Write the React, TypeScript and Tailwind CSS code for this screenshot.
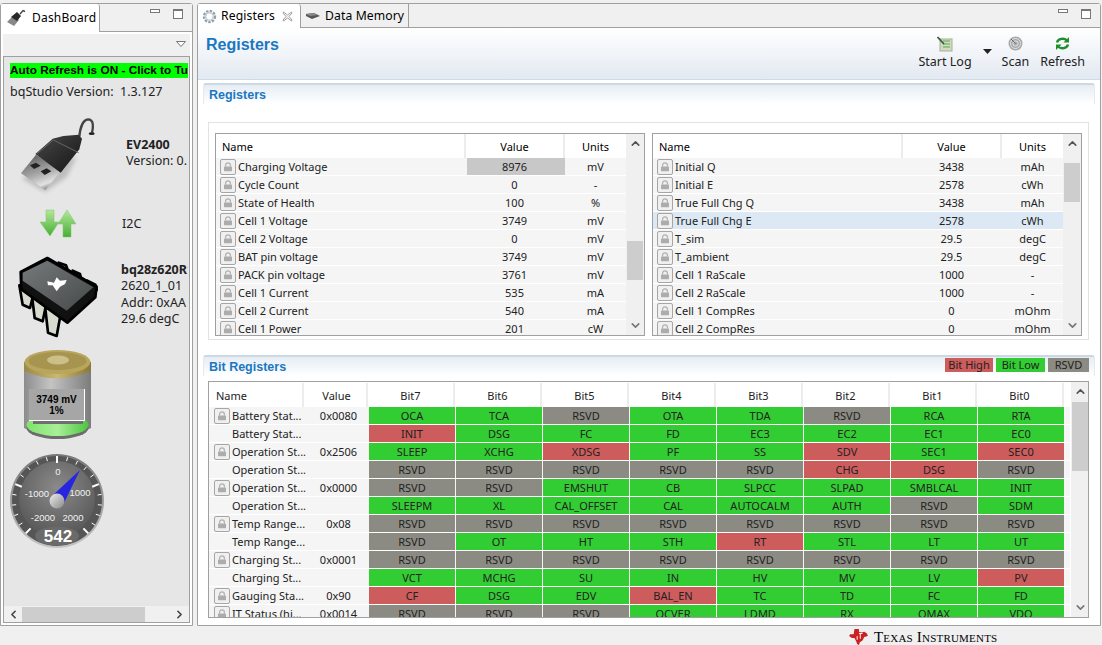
import { ChevronDown, ChevronLeft, ChevronRight, ChevronUp } from "lucide-react";

type Row = [string, string, string];
type Bit = [string, "g" | "r" | "x"];

const leftRows: Row[] = [
  ["Charging Voltage", "8976", "mV"],
  ["Cycle Count", "0", "-"],
  ["State of Health", "100", "%"],
  ["Cell 1 Voltage", "3749", "mV"],
  ["Cell 2 Voltage", "0", "mV"],
  ["BAT pin voltage", "3749", "mV"],
  ["PACK pin voltage", "3761", "mV"],
  ["Cell 1 Current", "535", "mA"],
  ["Cell 2 Current", "540", "mA"],
  ["Cell 1 Power", "201", "cW"],
];

const rightRows: Row[] = [
  ["Initial Q", "3438", "mAh"],
  ["Initial E", "2578", "cWh"],
  ["True Full Chg Q", "3438", "mAh"],
  ["True Full Chg E", "2578", "cWh"],
  ["T_sim", "29.5", "degC"],
  ["T_ambient", "29.5", "degC"],
  ["Cell 1 RaScale", "1000", "-"],
  ["Cell 2 RaScale", "1000", "-"],
  ["Cell 1 CompRes", "0", "mOhm"],
  ["Cell 2 CompRes", "0", "mOhm"],
];

const g = (s: string): Bit => [s, "g"];
const r = (s: string): Bit => [s, "r"];
const x: Bit = ["RSVD", "x"];

const bitRows: { name: string; value: string; lock: boolean; bits: Bit[] }[] = [
  { name: "Battery Stat...", value: "0x0080", lock: true, bits: [g("OCA"), g("TCA"), x, g("OTA"), g("TDA"), x, g("RCA"), g("RTA")] },
  { name: "Battery Stat...", value: "", lock: false, bits: [r("INIT"), g("DSG"), g("FC"), g("FD"), g("EC3"), g("EC2"), g("EC1"), g("EC0")] },
  { name: "Operation St...", value: "0x2506", lock: true, bits: [g("SLEEP"), g("XCHG"), r("XDSG"), g("PF"), g("SS"), r("SDV"), g("SEC1"), r("SEC0")] },
  { name: "Operation St...", value: "", lock: false, bits: [x, x, x, x, x, r("CHG"), r("DSG"), x] },
  { name: "Operation St...", value: "0x0000", lock: true, bits: [x, x, g("EMSHUT"), g("CB"), g("SLPCC"), g("SLPAD"), g("SMBLCAL"), g("INIT")] },
  { name: "Operation St...", value: "", lock: false, bits: [g("SLEEPM"), g("XL"), g("CAL_OFFSET"), g("CAL"), g("AUTOCALM"), g("AUTH"), x, g("SDM")] },
  { name: "Temp Range...", value: "0x08", lock: true, bits: [x, x, x, x, x, x, x, x] },
  { name: "Temp Range...", value: "", lock: false, bits: [x, g("OT"), g("HT"), g("STH"), r("RT"), g("STL"), g("LT"), g("UT")] },
  { name: "Charging St...", value: "0x0001", lock: true, bits: [x, x, x, x, x, x, x, x] },
  { name: "Charging St...", value: "", lock: false, bits: [g("VCT"), g("MCHG"), g("SU"), g("IN"), g("HV"), g("MV"), g("LV"), r("PV")] },
  { name: "Gauging Sta...", value: "0x90", lock: true, bits: [r("CF"), g("DSG"), g("EDV"), r("BAL_EN"), g("TC"), g("TD"), g("FC"), g("FD")] },
  { name: "IT Status (hi...", value: "0x0014", lock: true, bits: [x, x, x, g("OCVER"), g("LDMD"), g("RX"), g("QMAX"), g("VDQ")] },
];

const bitBg = { g: "bg-[#32cd32]", r: "bg-[#cd5c5c]", x: "bg-[#8b8b83]" };

function LockButton() {
  return (
    <span className="flex h-[16px] w-[16px] shrink-0 items-center justify-center rounded-[2px] border border-[#a6a6a6] bg-[#f0f0f0]">
      <svg width="10" height="10" viewBox="0 0 10 10">
        <path d="M2.6 4.5V3.2a2.4 2.4 0 0 1 4.8 0v1.3" fill="none" stroke="#b0b0b0" strokeWidth="1.2" />
        <rect x="1" y="4.4" width="8" height="4.8" rx="0.6" fill="#acacac" />
      </svg>
    </span>
  );
}

function WindowButtons() {
  return (
    <div className="flex items-start gap-[13px]">
      <span className="mt-[5px] h-[4px] w-[10px] border border-[#777] bg-white" />
      <span className="mt-[5px] h-[10px] w-[10px] border border-[#777] border-t-2 bg-white" />
    </div>
  );
}

function VScroll({ thumb }: { thumb: string }) {
  return (
    <div className="flex w-[18px] shrink-0 flex-col items-center bg-[#f0f0f0]">
      <ChevronUp size={13} strokeWidth={3} className="mt-[3px] shrink-0 text-[#555]" />
      <div className="w-full flex-1 overflow-hidden px-[1px]">
        <div className={`bg-[#cdcdcd] ${thumb}`} />
      </div>
      <ChevronDown size={13} strokeWidth={3} className="mb-[3px] shrink-0 text-[#777]" />
    </div>
  );
}

function RegTable({ rows, thumb, selected, hot }: { rows: Row[]; thumb: string; selected?: number; hot?: number }) {
  return (
    <div className="flex h-[203px] w-[430px] overflow-hidden border border-[#a0a0a0] bg-white">
      <div className="w-[410px] shrink-0">
        <div className="flex h-[24px] text-black">
          <div className="flex w-[250px] items-center border-r-2 border-[#ececec] pl-[6px]">Name</div>
          <div className="flex w-[99px] items-center justify-center border-r-2 border-[#ececec]">Value</div>
          <div className="flex w-[61px] items-center justify-center">Units</div>
        </div>
        {rows.map((row, i) => (
          <div key={row[0]} className={`flex h-[18px] items-center border-b border-white ${i === selected ? "bg-[#dce9f4]" : "bg-[#f5f5f5]"}`}>
            <div className="flex w-[251px] items-center gap-[2px] pl-[4px]">
              <LockButton />
              <span className="whitespace-nowrap">{row[0]}</span>
            </div>
            <div className={`flex h-full w-[98px] items-center justify-center pr-[3px] ${i === hot ? "bg-[#c8c8c8]" : ""}`}>{row[1]}</div>
            <div className="flex w-[61px] items-center justify-center">{row[2]}</div>
          </div>
        ))}
      </div>
      <VScroll thumb={thumb} />
    </div>
  );
}

function SectionHead({ title, children }: { title: string; children?: React.ReactNode }) {
  return (
    <div className="flex h-[21px] items-center justify-between rounded-t-[3px] border-t-2 border-x border-x-[#e4eaf0] border-t-[#ccd8e4] bg-gradient-to-b from-[#e6edf4] to-white pl-[5px] pr-[5px] pt-[1px]">
      <span className="font-['Liberation_Sans',sans-serif] text-[12.5px] font-bold text-[#1a78c2]">{title}</span>
      {children}
    </div>
  );
}

function BitTable() {
  return (
    <div className="ml-[5px] flex h-[237px] w-[881px] overflow-hidden border border-[#a0a0a0] bg-white">
      <div className="w-[861px] shrink-0 bg-[#f5f5f5]">
        <div className="grid h-[25px] grid-cols-[95px_64px_repeat(8,87px)] bg-white pt-[1px]">
          <div className="flex items-center border-r-2 border-[#ececec] pl-[7px]">Name</div>
          <div className="flex items-center justify-center border-r-2 border-[#ececec] pl-[3px]">Value</div>
          {["Bit7", "Bit6", "Bit5", "Bit4", "Bit3", "Bit2", "Bit1", "Bit0"].map((b) => (
            <div key={b} className="flex items-center justify-center border-r-2 border-[#ececec]">{b}</div>
          ))}
        </div>
        {bitRows.map((row, i) => (
          <div key={i} className="grid h-[18px] grid-cols-[95px_64px_repeat(8,87px)] grid-rows-[17px] border-b border-white">
            <div className="flex items-center gap-[2px] pl-[5px]">
              {row.lock ? <LockButton /> : <span className="w-[16px] shrink-0" />}
              <span className="whitespace-nowrap">{row.name}</span>
            </div>
            <div className="flex items-center justify-center pl-[5px]">{row.value}</div>
            {row.bits.map((b, j) => (
              <div key={j} className={`ml-px flex items-center justify-center ${bitBg[b[1]]}`}>{b[0]}</div>
            ))}
          </div>
        ))}
      </div>
      <div className="w-px shrink-0 bg-white" />
      <VScroll thumb="mt-[4px] h-[69px]" />
    </div>
  );
}

function UsbIcon() {
  return (
    <svg width="100" height="90" viewBox="0 0 300 270" className="shrink-0">
      <defs>
        <linearGradient id="metal" x1="0.2" y1="0" x2="0.6" y2="1">
          <stop offset="0" stopColor="#5c5c5c" />
          <stop offset="0.55" stopColor="#a8a8a8" />
          <stop offset="0.85" stopColor="#e2e2e2" />
          <stop offset="1" stopColor="#888" />
        </linearGradient>
        <linearGradient id="plug" x1="0" y1="0" x2="1" y2="1">
          <stop offset="0" stopColor="#484848" />
          <stop offset="1" stopColor="#141414" />
        </linearGradient>
        <filter id="soft"><feGaussianBlur stdDeviation="7" /></filter>
      </defs>
      <path d="M36 200 L105 240 L170 195 L200 135 L120 150Z" fill="#bdbdbd" filter="url(#soft)" />
      <path d="M208 74 C210 50 218 24 234 22 C252 22 250 45 246 62" fill="none" stroke="#444" strokeWidth="7" />
      <ellipse cx="245" cy="65" rx="9" ry="4" fill="#222" />
      <path d="M33 184 L78 128 L152 178 L106 234Z" fill="url(#metal)" />
      <path d="M60 160 L78 152 L92 161 L72 171Z" fill="#222" />
      <path d="M92 178 L110 169 L124 178 L104 189Z" fill="#222" />
      <path d="M76 126 L128 80 L160 72 L206 68 L216 80 L208 112 L152 182Z" fill="url(#plug)" />
      <path d="M80 126 L130 84 L206 122" fill="none" stroke="#666" strokeWidth="3" />
    </svg>
  );
}

function ArrowsIcon() {
  return (
    <svg width="38" height="30" viewBox="0 0 38 30" className="shrink-0">
      <defs>
        <linearGradient id="arr" x1="0" y1="0" x2="0" y2="1">
          <stop offset="0" stopColor="#b5e69a" />
          <stop offset="1" stopColor="#45b035" />
        </linearGradient>
      </defs>
      <path d="M7 1 H15 V13 H20 L11 27 L1 13 H7Z" fill="url(#arr)" stroke="#7fc66c" strokeWidth="0.5" />
      <path d="M24 28 H32 V15 H37 L28 1 L19 15 H24Z" fill="url(#arr)" stroke="#7fc66c" strokeWidth="0.5" />
    </svg>
  );
}

function ChipIcon() {
  return (
    <svg width="100" height="90" viewBox="0 0 300 270" className="shrink-0">
      <defs>
        <linearGradient id="chip" x1="0" y1="0" x2="1" y2="1">
          <stop offset="0" stopColor="#757a7a" />
          <stop offset="1" stopColor="#464949" />
        </linearGradient>
      </defs>
      <g stroke="#000" strokeWidth="8" strokeLinejoin="round">
        <path d="M146 32 L168 40 L174 56 L150 50Z" fill="#ddd" />
        <path d="M188 56 L210 66 L214 82 L192 74Z" fill="#ddd" />
        <path d="M232 86 L256 98 L260 114 L236 104Z" fill="#ddd" />
        <path d="M28 100 L62 100 L72 120 L60 168 L38 158Z" fill="#d8dcd0" />
        <path d="M66 132 L100 130 L110 150 L98 208 L74 198Z" fill="#d8dcd0" />
        <path d="M106 170 L142 168 L152 186 L140 252 L114 242Z" fill="#d8dcd0" />
        <path d="M32 60 L112 18 L260 104 L256 136 L172 212 L34 112Z" fill="#111" />
      </g>
      <path d="M38 62 L112 26 L250 106 L170 176 L38 86Z" fill="url(#chip)" />
      <path d="M112 88 L132 92 L140 76 L150 86 L170 84 L165 96 L150 104 L140 118 L128 100 L114 100Z" fill="#fff" />
    </svg>
  );
}

function Battery() {
  return (
    <div className="relative h-[95px] w-[80px]">
      <svg width="80" height="95" viewBox="0 0 80 95">
        <defs>
          <linearGradient id="body" x1="0" y1="0" x2="1" y2="0">
            <stop offset="0" stopColor="#8c8c8c" />
            <stop offset="0.4" stopColor="#c4c4c4" />
            <stop offset="1" stopColor="#7c7c7c" />
          </linearGradient>
          <linearGradient id="gold" x1="0" y1="0" x2="1" y2="0">
            <stop offset="0" stopColor="#9b8a45" />
            <stop offset="0.5" stopColor="#c9b874" />
            <stop offset="1" stopColor="#8a7836" />
          </linearGradient>
          <linearGradient id="green" x1="0" y1="0" x2="1" y2="0">
            <stop offset="0" stopColor="#7fe36c" />
            <stop offset="0.5" stopColor="#a8ef98" />
            <stop offset="1" stopColor="#4cc540" />
          </linearGradient>
        </defs>
        <path d="M5 18 H72 V80 Q38 98 5 80Z" fill="url(#body)" />
        <ellipse cx="38.5" cy="80" rx="31" ry="11" fill="#6c6c6c" />
        <ellipse cx="38.5" cy="77" rx="31" ry="11" fill="url(#green)" />
        <rect x="14" y="60" width="50" height="16" fill="#6f6f6f" />
        <path d="M5 14 V23 Q38 38 72 23 V14Z" fill="url(#gold)" />
        <ellipse cx="38.5" cy="14" rx="33" ry="12" fill="#b9a65c" />
        <ellipse cx="38.5" cy="13" rx="29" ry="9" fill="#a6944f" />
        <ellipse cx="39" cy="12" rx="11" ry="4.5" fill="#cdbf88" />
      </svg>
      <div className="absolute left-[10px] top-[41px] flex h-[32px] w-[56px] flex-col items-center justify-center border-b border-r border-white bg-[#a6a6a6] font-['Liberation_Sans',sans-serif] text-[10px] font-bold leading-[11px] text-black">
        <span>3749 mV</span>
        <span>1%</span>
      </div>
    </div>
  );
}

function Gauge() {
  const ticks = [];
  for (let i = -10; i <= 10; i++) {
    const major = i % 5 === 0;
    const a = ((i * 13.6 - 90) * Math.PI) / 180;
    const r1 = 45;
    const r2 = major ? 38 : 41;
    ticks.push(
      <line
        key={i}
        x1={52 + r1 * Math.cos(a)}
        y1={52 + r1 * Math.sin(a)}
        x2={52 + r2 * Math.cos(a)}
        y2={52 + r2 * Math.sin(a)}
        stroke="#fff"
        strokeWidth={major ? 2 : 1}
      />
    );
  }
  return (
    <svg width="105" height="105" viewBox="0 0 105 105">
      <defs>
        <linearGradient id="ring" x1="0" y1="0" x2="0" y2="1">
          <stop offset="0" stopColor="#777" />
          <stop offset="1" stopColor="#c4c4c4" />
        </linearGradient>
        <radialGradient id="dial2" cx="0.5" cy="0.35" r="0.6">
          <stop offset="0" stopColor="#8a8a8a" />
          <stop offset="1" stopColor="#5c5c5c" />
        </radialGradient>
        <linearGradient id="hub" x1="0" y1="0" x2="1" y2="1">
          <stop offset="0" stopColor="#eee" />
          <stop offset="1" stopColor="#888" />
        </linearGradient>
      </defs>
      <circle cx="52" cy="52" r="47" fill="url(#ring)" />
      <circle cx="52" cy="52" r="45" fill="#555" />
      <circle cx="52" cy="50" r="38" fill="url(#dial2)" />
      {ticks}
      <g fill="#f2f2f2" fontSize="9.5" textAnchor="middle" fontFamily="'Liberation Sans', sans-serif">
        <text x="53" y="26">0</text>
        <text x="32" y="48">-1000</text>
        <text x="75" y="47">1000</text>
        <text x="38" y="72">-2000</text>
        <text x="68" y="72">2000</text>
      </g>
      <ellipse cx="52" cy="87" rx="22" ry="9.5" fill="#6a6a6a" />
      <text x="53" y="93" fill="#fff" fontSize="17" fontWeight="700" textAnchor="middle" fontFamily="'Liberation Sans', sans-serif">542</text>
      <path d="M75 21 L47 47 L58 56Z" fill="#2626e0" />
      <circle cx="52" cy="52" r="7.5" fill="url(#hub)" />
    </svg>
  );
}

function Dashboard() {
  return (
    <div className="flex h-[623px] w-[193px] shrink-0 flex-col rounded-t-[3px] border border-[#a0a0a0] bg-white">
      <div className="flex h-[28px] shrink-0 bg-[#f0f0f0]">
        <div className="flex h-[28px] w-[99px] items-center gap-[5px] rounded-t-[3px] border-r border-[#a0a0a0] bg-white pl-[5px]">
          <svg width="21" height="19" viewBox="0 0 21 19" className="shrink-0">
            <path d="M1 13 L7 7 L13 11 L8 17Z" fill="#888" />
            <path d="M5 8 L11 3 L15 7 L11 12Z" fill="#2a2a2a" />
            <path d="M14 5 L17 1.5 L19 2.5" fill="none" stroke="#444" strokeWidth="1.4" />
          </svg>
          <span className="font-['Noto_Sans',sans-serif] text-[12px] tracking-[0.2px]">DashBoard</span>
        </div>
        <div className="flex flex-1 justify-end border-b border-[#a0a0a0] pr-[9px]">
          <WindowButtons />
        </div>
      </div>
      <div className="flex flex-1 flex-col p-[2px]">
        <div className="flex h-[22px] shrink-0 justify-end bg-[#f0f0f0] pr-[4px] pt-[7px]">
          <svg width="10" height="6" viewBox="0 0 10 6"><path d="M0.5 0.5 H9.5 L5 5.5Z" fill="#fff" stroke="#777" /></svg>
        </div>
        <div className="flex min-h-0 flex-1 flex-col overflow-hidden border border-[#a0a0a0] border-b-0 bg-[#e6e6e6] font-['Noto_Sans',sans-serif] text-[12.5px] text-[#222]">
          <div className="ml-[6px] mt-[6px] h-[15px] w-[178px] shrink-0 overflow-hidden whitespace-nowrap bg-[#00ff00] font-['Liberation_Sans',sans-serif] text-[11.8px] font-bold leading-[15px] text-black">
            Auto Refresh is ON - Click to Turn Off
          </div>
          <div className="ml-[6px] mt-[5px] h-[18px] shrink-0 whitespace-pre leading-[18px]">bqStudio Version:  1.3.127</div>
          <div className="mt-[11px] flex h-[90px] shrink-0 items-start pl-[6px]">
            <UsbIcon />
            <div className="ml-[16px] mt-[25px] w-[62px] overflow-hidden whitespace-nowrap">
              <div className="font-bold leading-[16px]">EV2400</div>
              <div className="leading-[16px]">Version: 0.</div>
            </div>
          </div>
          <div className="mt-[7px] flex h-[30px] shrink-0 items-center pl-[35px]">
            <ArrowsIcon />
            <span className="ml-[45px]">I2C</span>
          </div>
          <div className="mt-[13px] flex h-[90px] shrink-0 items-start pl-[6px]">
            <ChipIcon />
            <div className="ml-[11px] mt-[10px] w-[67px] overflow-hidden whitespace-nowrap leading-[16.3px]">
              <div className="font-bold">bq28z620R1</div>
              <div>2620_1_01</div>
              <div>Addr: 0xAA</div>
              <div>29.6 degC</div>
            </div>
          </div>
          <div className="ml-[15px] mt-[6px] shrink-0"><Battery /></div>
          <div className="ml-[1px] mt-[6px] shrink-0"><Gauge /></div>
        </div>
        <div className="flex h-[17px] shrink-0 items-center border border-t-0 border-[#a0a0a0] bg-[#f0f0f0]">
          <ChevronLeft size={13} strokeWidth={3} className="ml-[3px] text-[#444]" />
          <div className="ml-[2px] mr-auto h-[15px] w-[123px] bg-[#cdcdcd]" />
          <ChevronRight size={13} strokeWidth={3} className="mr-[3px] text-[#444]" />
        </div>
      </div>
    </div>
  );
}

function ToolButton({ label, icon }: { label: string; icon: React.ReactNode }) {
  return (
    <div className="flex flex-col items-center gap-[1px]">
      <div className="flex h-[17px] items-center">{icon}</div>
      <span className="text-[12.5px] leading-[18px]">{label}</span>
    </div>
  );
}

function Registers() {
  return (
    <div className="flex h-[623px] w-[904px] flex-col rounded-t-[3px] border border-[#a0a0a0] bg-white">
      <div className="flex h-[24px] shrink-0 bg-[#f0f0f0] font-['Noto_Sans',sans-serif] text-[12.2px] tracking-[0.1px]">
        <div className="flex h-[24px] w-[103px] items-center rounded-t-[3px] border-r border-[#a0a0a0] bg-white pl-[4px]">
          <svg width="15" height="15" viewBox="0 0 15 15" className="shrink-0">
            <circle cx="7.5" cy="7.5" r="5" fill="none" stroke="#8f9eae" strokeWidth="3.4" strokeDasharray="2.2 1.1" />
            <circle cx="7.5" cy="7.5" r="4" fill="none" stroke="#c8d0d8" strokeWidth="1.4" />
          </svg>
          <span className="ml-[4px]">Registers</span>
          <svg width="11" height="11" viewBox="0 0 11 11" className="ml-[7px]">
            <path d="M1.5 1 L5.5 4 L9.5 1 L10 2 L7 5.5 L10 9 L9.5 10 L5.5 7 L1.5 10 L1 9 L4 5.5 L1 2Z" fill="#f4f4f4" stroke="#8a8a8a" strokeWidth="0.8" />
          </svg>
        </div>
        <div className="flex h-[24px] w-[108px] items-center whitespace-nowrap border-b border-r border-[#a0a0a0] pl-[4px] pt-[1px]">
          <svg width="16" height="8" viewBox="0 0 16 8" className="shrink-0">
            <path d="M1 2 L9 1 L15 4 L7 7 L1 4Z" fill="#555" />
            <path d="M1 2 L9 1 L13 3 L5 4Z" fill="#8a8a8a" />
          </svg>
          <span className="ml-[4px]">Data Memory</span>
        </div>
        <div className="flex flex-1 justify-end border-b border-[#a0a0a0] pr-[9px]">
          <WindowButtons />
        </div>
      </div>
      <div className="flex h-[52px] shrink-0 items-start justify-between border-b border-[#cfdce6] bg-gradient-to-b from-white to-[#e3e9f1]">
        <span className="ml-[8px] mt-[6px] font-['Liberation_Sans',sans-serif] text-[16px] font-bold leading-[22px] text-[#1a78c2]">Registers</span>
        <div className="mr-[15px] mt-[7px] flex font-['Noto_Sans',sans-serif] text-[#222]">
          <ToolButton
            label="Start Log"
            icon={
              <svg width="16" height="16" viewBox="0 0 16 16">
                <rect x="3" y="3" width="12" height="12" fill="#cfdcc0" stroke="#a8ad98" />
                <path d="M6 5 H13 M6 8 H13 M6 11 H13" stroke="#5fa852" strokeWidth="1.2" />
                <path d="M0.5 1 L7 8" stroke="#3a5a3a" strokeWidth="1.8" />
              </svg>
            }
          />
          <svg width="9" height="5" viewBox="0 0 9 5" className="ml-[11px] mt-[14px]"><path d="M0 0 H9 L4.5 5Z" fill="#222" /></svg>
          <div className="ml-[10px]">
            <ToolButton
              label="Scan"
              icon={
                <svg width="15" height="15" viewBox="0 0 15 15">
                  <circle cx="7.5" cy="7.5" r="7" fill="#a9a9a9" />
                  <circle cx="7.5" cy="7.5" r="5" fill="none" stroke="#e2e2e2" />
                  <circle cx="7.5" cy="7.5" r="2.6" fill="none" stroke="#e8e8e8" />
                  <path d="M7.5 7.5 L3 3" stroke="#666" />
                </svg>
              }
            />
          </div>
          <div className="ml-[11px]">
            <ToolButton
              label="Refresh"
              icon={
                <svg width="15" height="15" viewBox="0 0 15 15" fill="none" stroke="#1f8f2c" strokeWidth="2.4">
                  <path d="M2 6.5 C3 2.5 9 1.5 12 4.5" />
                  <path d="M13 8.5 C12 12.5 6 13.5 3 10.5" />
                  <path d="M14 1 V6.5 H8.5Z" fill="#1f8f2c" strokeWidth="0" />
                  <path d="M1 14 V8.5 H6.5Z" fill="#1f8f2c" strokeWidth="0" />
                </svg>
              }
            />
          </div>
        </div>
      </div>
      <div className="flex flex-1 flex-col px-[5px] pt-[3px] font-['Noto_Sans',sans-serif] text-[11px] leading-[15px] text-[#222]">
        <SectionHead title="Registers" />
        <div className="ml-[5px] mt-[18px] flex h-[218px] w-[881px] gap-[7px] border border-[#e2e2e2] pl-[6px] pt-[10px]">
          <RegTable rows={leftRows} thumb="mt-[91px] h-[39px]" hot={0} />
          <RegTable rows={rightRows} thumb="mt-[13px] h-[39px]" selected={3} />
        </div>
        <div className="mt-[15px]">
          <SectionHead title="Bit Registers">
            <div className="mb-[5px] flex gap-[3px] text-[11px] leading-[14px]">
              <span className="w-[48px] bg-[#cd5c5c] text-center">Bit High</span>
              <span className="w-[49px] bg-[#32cd32] text-center">Bit Low</span>
              <span className="w-[41px] bg-[#8b8b83] text-center">RSVD</span>
            </div>
          </SectionHead>
        </div>
        <div className="mt-[5px]"><BitTable /></div>
      </div>
    </div>
  );
}

export default function App() {
  return (
    <div className="flex h-[645px] w-[1102px] flex-col overflow-hidden bg-[#f0f0f0]">
      <div className="flex gap-[4px] pt-[3px]">
        <Dashboard />
        <Registers />
      </div>
      <div className="flex h-[19px] items-center pl-[848px] pt-[3px]">
        <svg width="21" height="16" viewBox="0 0 21 18" className="shrink-0">
          <path d="M6 0 H11 V3 L14 4 L17 3 L20 5 L21 8 L17 9 L15 13 L12 15 L11 18 L9 17 L8 14 L6 10 L3 10 L0 8 L1 6 L5 6Z" fill="#cc1f1f" />
          <path d="M11 5 H15 M12.5 5 V11 M9 8 V12" stroke="#fff" strokeWidth="1.1" fill="none" />
        </svg>
        <span className="ml-[5px] whitespace-nowrap font-['Liberation_Serif',serif] text-[15px] leading-none tracking-[0.2px] text-black [font-variant:small-caps]">Texas Instruments</span>
      </div>
    </div>
  );
}
